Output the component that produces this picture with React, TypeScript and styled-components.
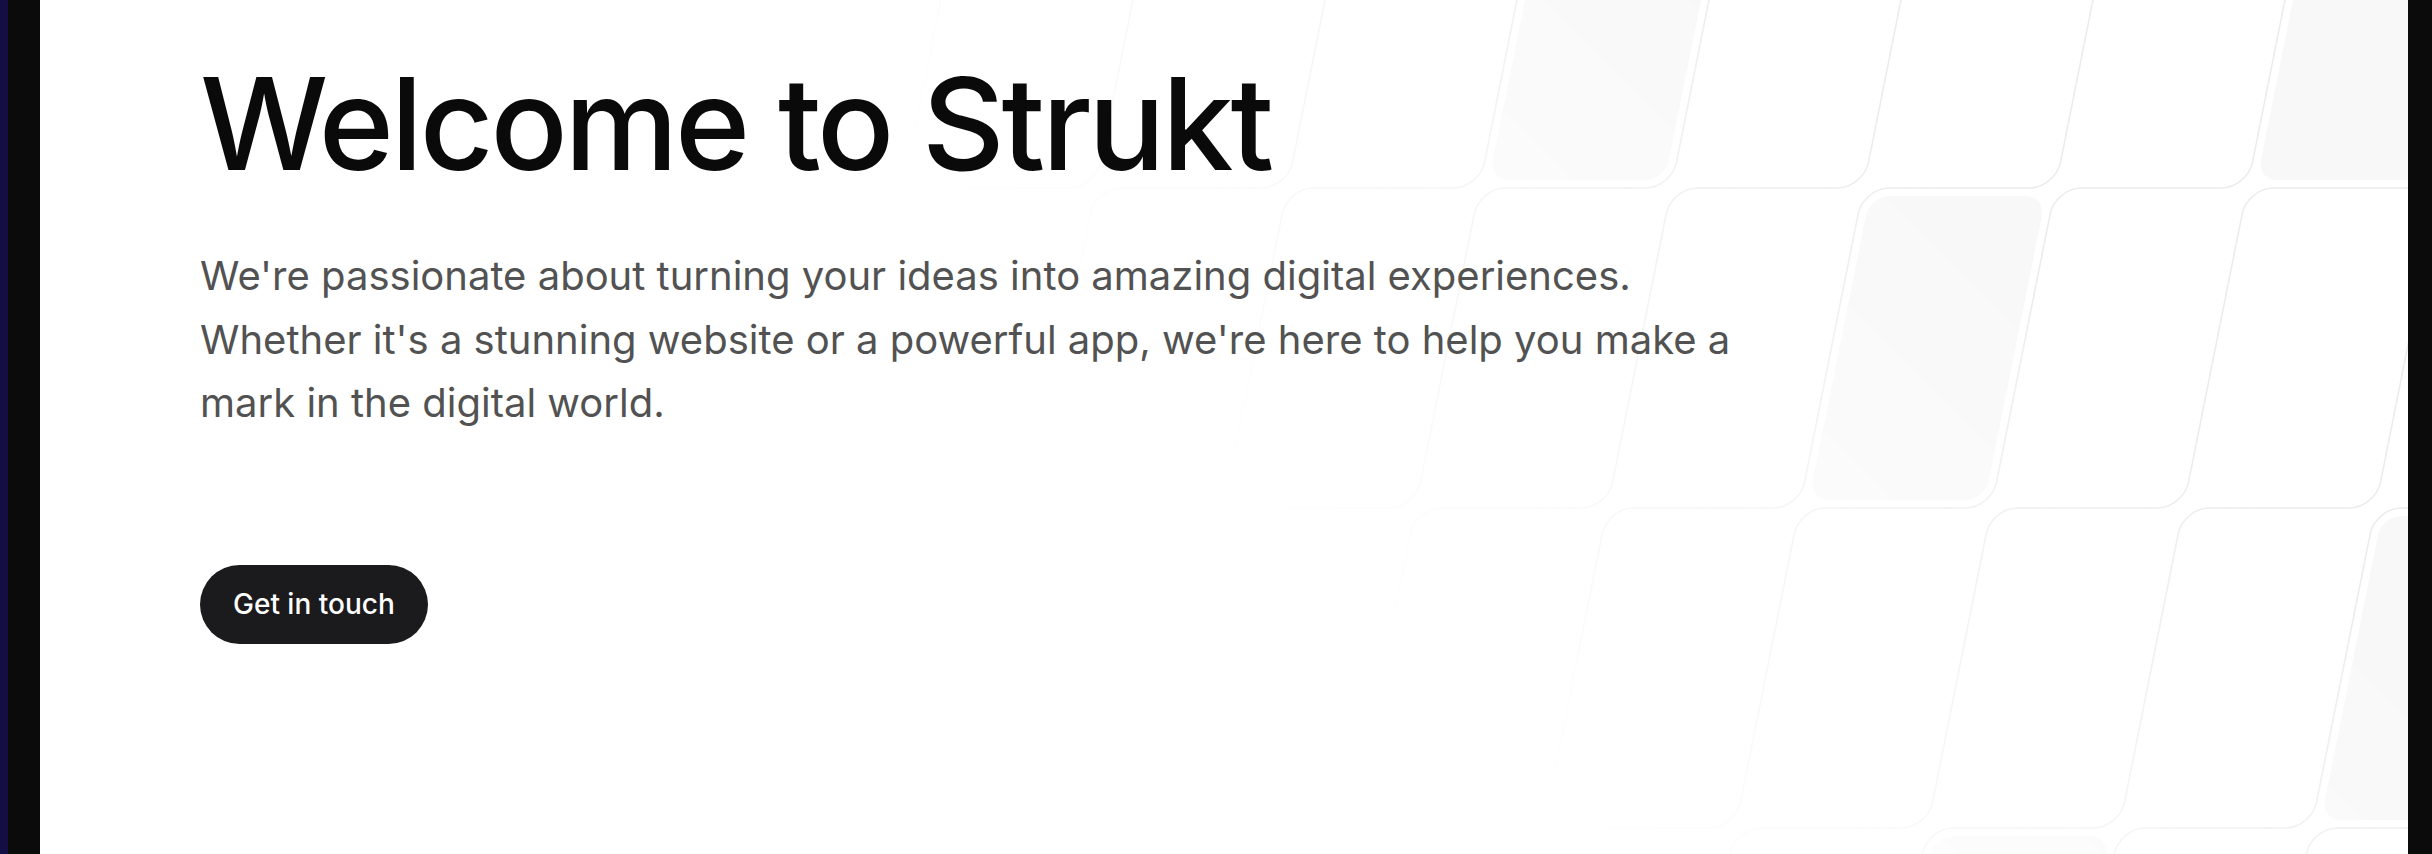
import React from "react";
import styled, { createGlobalStyle } from "styled-components";

const GlobalStyle = createGlobalStyle`
  html, body {
    margin: 0;
    padding: 0;
    height: 100%;
    background: #0b0b0b;
  }
  body {
    font-family: Inter, "Noto Sans", "Liberation Sans", sans-serif;
    overflow: hidden;
    -webkit-font-smoothing: antialiased;
  }
  #root { height: 100%; }
`;

const Frame = styled.div`
  display: flex;
  width: 100%;
  height: 854px;
  background: #0b0b0b;
`;

const EdgeStrip = styled.div`
  flex: none;
  width: 8px;
  background: #140e45;
`;

const Gutter = styled.div<{ $w: number }>`
  flex: none;
  width: ${(p) => p.$w}px;
  background: #0b0b0b;
`;

const Panel = styled.main`
  position: relative;
  flex: 1;
  min-width: 0;
  background: #ffffff;
  overflow: hidden;
`;

const Pattern = styled.svg`
  position: absolute;
  inset: 0;
  width: 100%;
  height: 100%;
  pointer-events: none;
  -webkit-mask-image: linear-gradient(225deg, #000 20%, transparent 52%);
  mask-image: linear-gradient(225deg, #000 20%, transparent 52%);
`;

const CellLines = styled.path`
  fill: none;
  stroke: #ececec;
  stroke-width: 1.6;
`;

const CellFill = styled.rect`
  fill: #f8f8f8;
`;

const Content = styled.section`
  position: relative;
  display: flex;
  flex-direction: column;
  align-items: flex-start;
  padding: 60px 0 0 160px;
`;

const Title = styled.h1`
  margin: 0;
  font-size: 128px;
  line-height: 128px;
  font-weight: 500;
  letter-spacing: -0.025em;
  color: #0a0a0a;
`;

const Lead = styled.p`
  margin: 56px 0 0;
  max-width: 1545px;
  font-size: 40px;
  line-height: 63.5px;
  font-weight: 400;
  color: #525252;
`;

const CtaButton = styled.button`
  margin-top: 130px;
  height: 79px;
  padding: 0 33px;
  border: none;
  border-radius: 999px;
  background: #1b1b1d;
  color: #ffffff;
  font-family: inherit;
  font-size: 28px;
  font-weight: 500;
  cursor: pointer;
`;

const CW = 192;
const RH = 320;
const X0 = 1477;
const Y0 = -132;
const R = 26;
const FILLED = new Set(["0:0", "0:4", "1:2", "2:5", "3:3"]);

function cellPath(x: number, y: number) {
  const w = CW;
  const h = RH;
  const r = R;
  return [
    `M ${x} ${y + h - r} L ${x} ${y + r} A ${r} ${r} 0 0 1 ${x + r} ${y} L ${x + w - r} ${y}`,
    `M ${x + w} ${y + h - r} A ${r} ${r} 0 0 1 ${x + w - r} ${y + h}`,
  ].join(" ");
}

function SkewGrid() {
  const cells: { j: number; k: number }[] = [];
  for (let j = 0; j < 4; j++) {
    for (let k = -8; k <= 5; k++) cells.push({ j, k });
  }
  return (
    <Pattern aria-hidden="true">
      <g transform="skewX(-11.3099)">
        {cells.map(({ j, k }) => {
          const x = X0 + k * CW;
          const y = Y0 + j * RH;
          return (
            <g key={`${j}:${k}`}>
              {FILLED.has(`${j}:${k}`) && (
                <CellFill x={x + 8} y={y + 8} width={CW - 16} height={RH - 16} rx={R - 6} ry={R - 6} />
              )}
              <CellLines d={cellPath(x, y)} />
            </g>
          );
        })}
      </g>
    </Pattern>
  );
}

export default function App() {
  return (
    <>
      <GlobalStyle />
      <Frame>
        <EdgeStrip />
        <Gutter $w={32} />
        <Panel>
          <SkewGrid />
          <Content>
            <Title>Welcome to Strukt</Title>
            <Lead>
              We're passionate about turning your ideas into amazing digital experiences. Whether it's a
              stunning website or a powerful app, we're here to help you make a mark in the digital world.
            </Lead>
            <CtaButton type="button">Get in touch</CtaButton>
          </Content>
        </Panel>
        <Gutter $w={24} />
      </Frame>
    </>
  );
}
